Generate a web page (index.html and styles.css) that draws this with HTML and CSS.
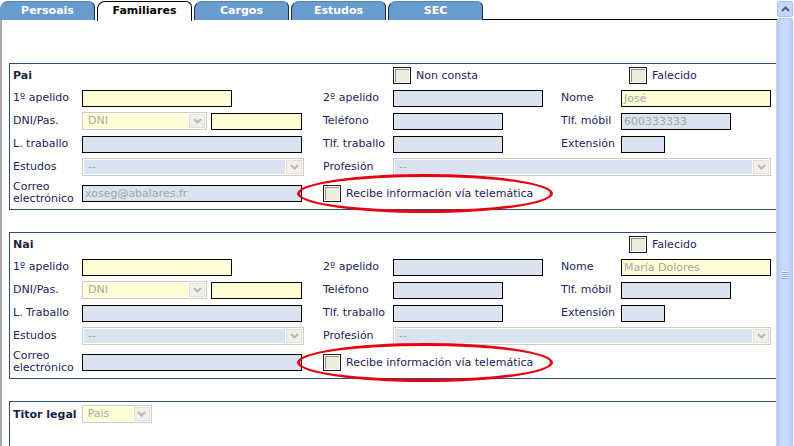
FILE: index.html
```html
<!DOCTYPE html>
<html lang="gl">
<head>
<meta charset="utf-8">
<title>Familiares</title>
<link rel="stylesheet" href="styles.css">
</head>
<body>
<div class="window">
  <div class="main">
    <div class="tabs">
      <div class="tab first">Persoais</div>
      <div class="tab active">Familiares</div>
      <div class="tab">Cargos</div>
      <div class="tab">Estudos</div>
      <div class="tab">SEC</div>
      <div class="tabfill"></div>
    </div>
    <div class="panel">
      <section class="group">
        <div class="grid">
          <div class="title">Pai</div>
          <label class="chk c4"><span class="cb"></span>Non consta</label>
          <label class="chk c6 fal"><span class="cb"></span>Falecido</label>

          <div class="lbl">1º apelido</div>
          <div class="inp y w150"></div>
          <div class="lbl">2º apelido</div>
          <div class="inp b w150"></div>
          <div class="lbl">Nome</div>
          <div class="inp y w150">José</div>

          <div class="lbl">DNI/Pas.</div>
          <div class="pair">
            <div class="sel w125"><span class="v y">DNI</span><span class="btn"><svg width="9" height="6" viewBox="0 0 9 6"><polyline points="1,1 4.5,4.5 8,1" fill="none" stroke="#b9b8b0" stroke-width="2"/></svg></span></div>
            <div class="inp y w91"></div>
          </div>
          <div class="lbl">Teléfono</div>
          <div class="inp b w110"></div>
          <div class="lbl">Tlf. móbil</div>
          <div class="inp b w110">600333333</div>

          <div class="lbl">L. traballo</div>
          <div class="inp b w220"></div>
          <div class="lbl">Tlf. traballo</div>
          <div class="inp b w110"></div>
          <div class="lbl">Extensión</div>
          <div class="inp b w44"></div>

          <div class="lbl">Estudos</div>
          <div class="sel w222"><span class="v b">--</span><span class="btn"><svg width="9" height="6" viewBox="0 0 9 6"><polyline points="1,1 4.5,4.5 8,1" fill="none" stroke="#b9b8b0" stroke-width="2"/></svg></span></div>
          <div class="lbl">Profesión</div>
          <div class="sel w378 c4s"><span class="v b">--</span><span class="btn"><svg width="9" height="6" viewBox="0 0 9 6"><polyline points="1,1 4.5,4.5 8,1" fill="none" stroke="#b9b8b0" stroke-width="2"/></svg></span></div>

          <div class="lbl two">Correo<br>electrónico</div>
          <div class="inp b w220">xoseg@abalares.fr</div>
          <label class="chk recibe"><span class="cb"></span>Recibe información vía telemática<span class="ring"></span></label>
        </div>
      </section>

      <section class="group">
        <div class="grid">
          <div class="title">Nai</div>
          <label class="chk c6 fal"><span class="cb"></span>Falecido</label>

          <div class="lbl">1º apelido</div>
          <div class="inp y w150"></div>
          <div class="lbl">2º apelido</div>
          <div class="inp b w150"></div>
          <div class="lbl">Nome</div>
          <div class="inp y w150">María Dolores</div>

          <div class="lbl">DNI/Pas.</div>
          <div class="pair">
            <div class="sel w125"><span class="v y">DNI</span><span class="btn"><svg width="9" height="6" viewBox="0 0 9 6"><polyline points="1,1 4.5,4.5 8,1" fill="none" stroke="#b9b8b0" stroke-width="2"/></svg></span></div>
            <div class="inp y w91"></div>
          </div>
          <div class="lbl">Teléfono</div>
          <div class="inp b w110"></div>
          <div class="lbl">Tlf. móbil</div>
          <div class="inp b w110"></div>

          <div class="lbl">L. Traballo</div>
          <div class="inp b w220"></div>
          <div class="lbl">Tlf. traballo</div>
          <div class="inp b w110"></div>
          <div class="lbl">Extensión</div>
          <div class="inp b w44"></div>

          <div class="lbl">Estudos</div>
          <div class="sel w222"><span class="v b">--</span><span class="btn"><svg width="9" height="6" viewBox="0 0 9 6"><polyline points="1,1 4.5,4.5 8,1" fill="none" stroke="#b9b8b0" stroke-width="2"/></svg></span></div>
          <div class="lbl">Profesión</div>
          <div class="sel w378 c4s"><span class="v b">--</span><span class="btn"><svg width="9" height="6" viewBox="0 0 9 6"><polyline points="1,1 4.5,4.5 8,1" fill="none" stroke="#b9b8b0" stroke-width="2"/></svg></span></div>

          <div class="lbl two">Correo<br>electrónico</div>
          <div class="inp b w220"></div>
          <label class="chk recibe"><span class="cb"></span>Recibe información vía telemática<span class="ring ring2"></span></label>
        </div>
      </section>

      <section class="group titor">
        <div class="titor-row">
          <div class="title">Titor legal</div>
          <div class="sel w70"><span class="v y">Pais</span><span class="btn"><svg width="9" height="6" viewBox="0 0 9 6"><polyline points="1,1 4.5,4.5 8,1" fill="none" stroke="#b9b8b0" stroke-width="2"/></svg></span></div>
        </div>
      </section>
    </div>
  </div>
  <div class="scroll">
    <div class="sb-up"><svg width="9" height="6" viewBox="0 0 9 6"><polyline points="1,5 4.5,1.5 8,5" fill="none" stroke="#4d6185" stroke-width="2"/></svg></div>
    <div class="sb-thumb"><span class="grip"></span></div>
  </div>
</div>
</body>
</html>
```

FILE: styles.css
```css
html, body {
  margin: 0;
  padding: 0;
  background: #fff;
}
body {
  overflow: hidden;
  height: 446px;
  font-family: "DejaVu Sans", Verdana, sans-serif;
  font-size: 11px;
  color: #22235a;
}
.window {
  display: flex;
  height: 446px;
  overflow: hidden;
}
.main {
  width: 777px;
  flex: none;
}

/* tabs */
.tabs {
  display: flex;
  height: 20px;
  gap: 2px;
}
.tab {
  width: 95px;
  height: 19px;
  margin-top: 1px;
  box-sizing: border-box;
  background: #6a9bcf;
  border: 1px solid #1f2c40;
  border-top-color: #5483bb;
  border-bottom: 0;
  border-radius: 8px 6px 0 0;
  color: #fff;
  font-weight: bold;
  text-align: center;
  line-height: 17px;
  flex: none;
}
.tab.first {
  border-left-color: #6a9bcf;
}
.tab.active {
  background: #fff;
  color: #000;
  border-color: #000;
  height: 20px;
}
.tabfill {
  flex: 1;
  margin-left: -2px;
  border-bottom: 1px solid #000;
}

/* panel */
.panel {
  height: 426px;
  box-sizing: border-box;
  border-left: 2px solid #a7a7a7;
  border-right: 1px solid #d8d8d8;
  padding: 43px 0 0 7px;
  overflow: hidden;
}
.group {
  position: relative;
  border: 1px solid #2f4e74;
  border-right: 0;
  padding: 3px 0 4px 3px;
  margin-bottom: 22px;
}
.group.titor {
  height: 41px;
  padding-bottom: 0;
  border-bottom: 0;
  margin-bottom: 0;
}
.grid {
  display: grid;
  grid-template-columns: 69px 241px 70px 168px 60px 1fr;
  grid-template-rows: 17px 18px 18px 18px 18px 24px;
  row-gap: 5px;
  align-items: center;
}
.title {
  font-weight: bold;
  color: #1a1f45;
  line-height: 17px;
}
.lbl {
  line-height: 18px;
  white-space: nowrap;
}
.lbl.two {
  line-height: 12px;
}
.c4 { grid-column: 4; }
.c6 { grid-column: 6; }
.c4s { grid-column: 4 / span 3; }

/* inputs */
.inp {
  height: 17px;
  box-sizing: border-box;
  border: 1px solid #000;
  color: #a5a5a5;
  padding: 0 2px;
  line-height: 15px;
  justify-self: start;
  white-space: nowrap;
  overflow: hidden;
}
.y { background: #ffffd5; }
.b { background: #d9e4f0; }
.w44 { width: 44px; }
.w70 { width: 70px; }
.w91 { width: 91px; }
.w110 { width: 110px; }
.w125 { width: 125px; }
.w150 { width: 150px; }
.w220 { width: 220px; }
.w222 { width: 222px; }
.w378 { width: 378px; }

.pair {
  display: flex;
  align-items: center;
  gap: 4px;
}

.sel {
  height: 18px;
  box-sizing: border-box;
  border: 1px solid #cfcdc0;
  padding: 1px;
  display: flex;
  gap: 1px;
  background: #fff;
  justify-self: start;
  flex: none;
}
.sel .v {
  flex: 1;
  color: #a8a8a8;
  padding-left: 4px;
  line-height: 14px;
  overflow: hidden;
}
.sel .btn {
  width: 16px;
  box-sizing: border-box;
  border: 1px solid #e1e0d8;
  background: #f1f0eb;
  display: flex;
  align-items: center;
  justify-content: center;
}

/* checkboxes */
.chk {
  display: flex;
  align-items: center;
  gap: 5px;
  white-space: nowrap;
}
.chk.fal {
  margin-left: 8px;
}
.cb {
  width: 18px;
  height: 17px;
  box-sizing: border-box;
  border: 1px solid #1d1d1d;
  background: #eeecdf;
  box-shadow: inset 0 0 0 1px #fff, inset 2px 2px 0 #8f8e87;
  flex: none;
}
.recibe {
  grid-column: 3 / span 4;
  position: relative;
  justify-self: start;
}
.ring {
  position: absolute;
  left: -26px;
  top: -11px;
  width: 256px;
  height: 39px;
  box-sizing: border-box;
  border: 3px solid #e60012;
  border-radius: 50%;
  pointer-events: none;
}

.titor-row {
  display: flex;
  align-items: center;
  gap: 5px;
}

/* scrollbar */
.scroll {
  width: 17px;
  flex: none;
  display: flex;
  flex-direction: column;
  gap: 1px;
  padding-top: 1px;
  height: 446px;
  box-sizing: border-box;
}
.sb-up {
  height: 16px;
  margin-right: 1px;
  box-sizing: border-box;
  border: 1px solid #aec2f1;
  border-radius: 2px;
  background: #c6d7fc;
  display: flex;
  align-items: center;
  justify-content: center;
  flex: none;
}
.sb-thumb {
  flex: 1;
  margin-right: 1px;
  box-sizing: border-box;
  border: 1px solid #b2c6f5;
  border-bottom: 0;
  border-radius: 2px 2px 0 0;
  background: linear-gradient(90deg, #b8ccf9, #c8d9fd 30%, #c8d9fd 70%, #b8ccf9);
  display: flex;
  align-items: flex-start;
  justify-content: center;
  padding-top: 252px;
}
.grip {
  width: 7px;
  height: 8px;
  background: repeating-linear-gradient(180deg, #f2f5fe 0 1px, #8ea7e6 1px 2px);
}
```
